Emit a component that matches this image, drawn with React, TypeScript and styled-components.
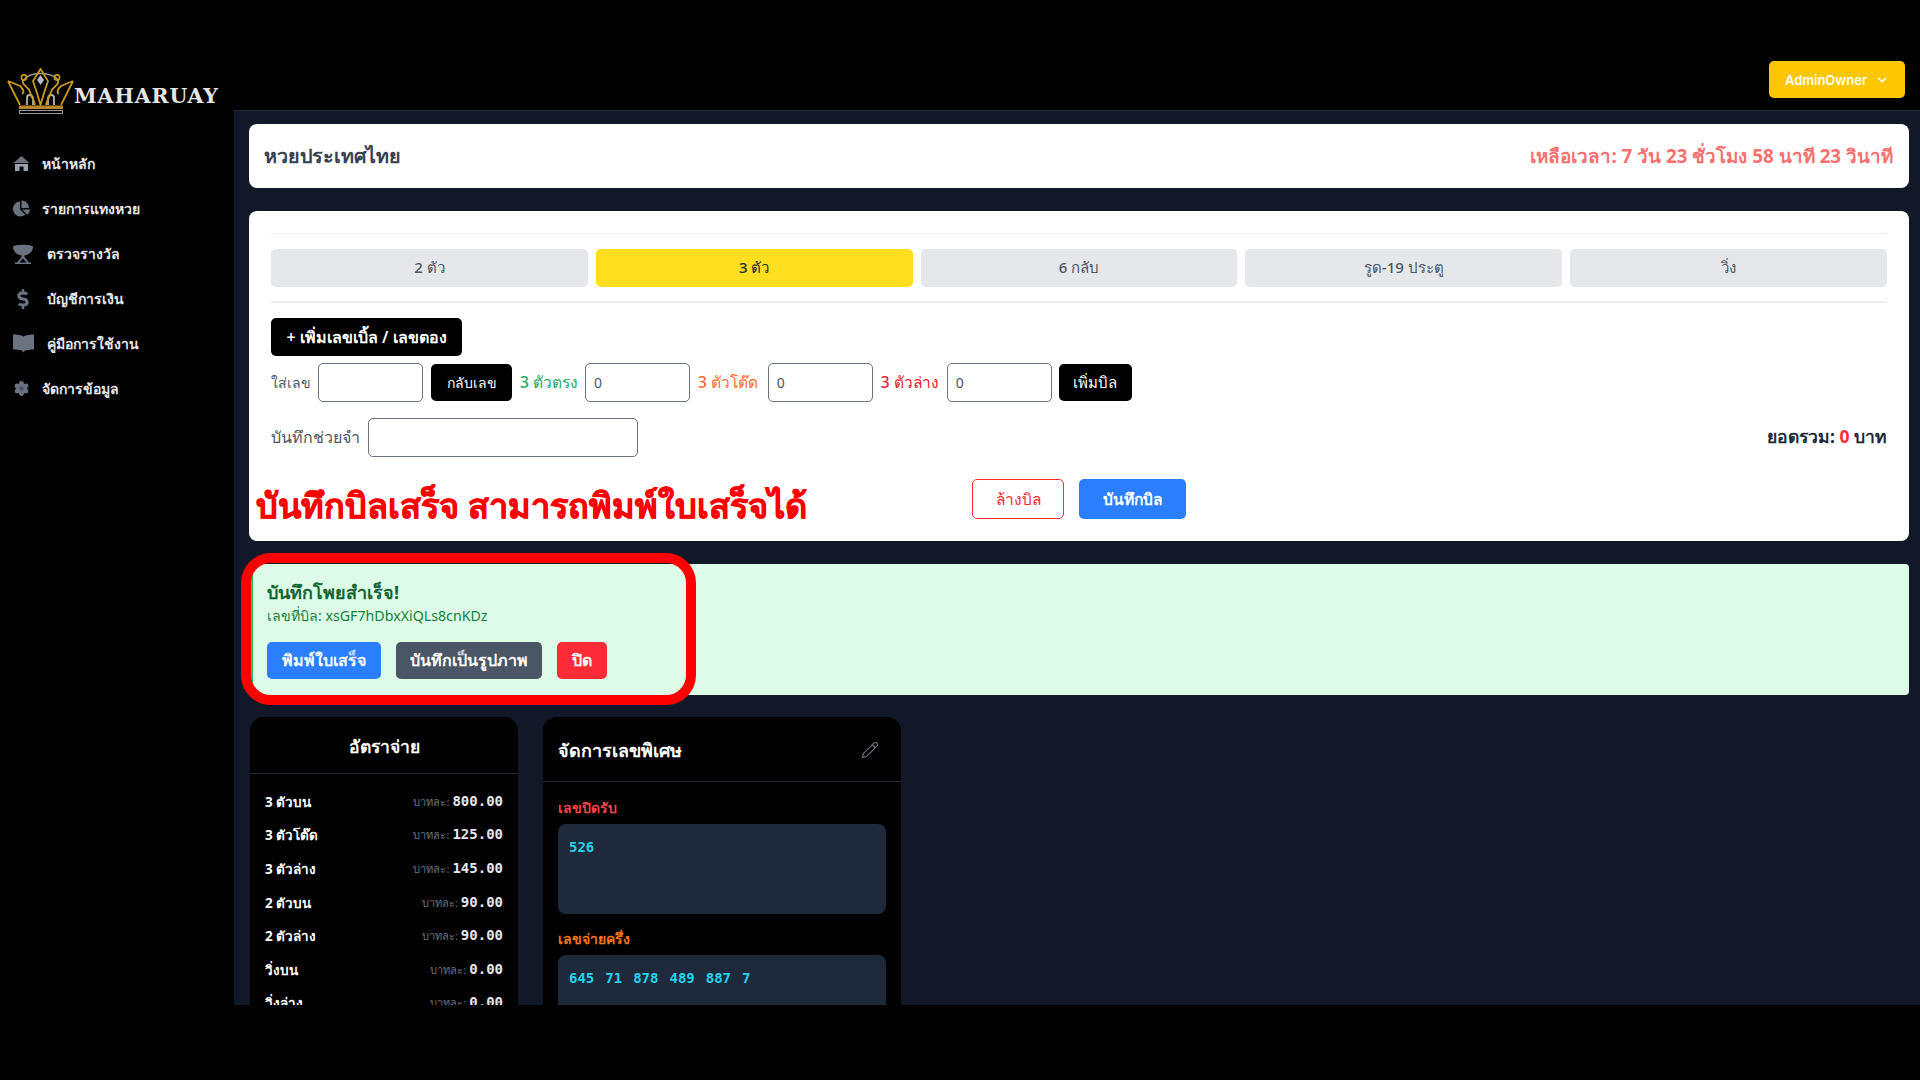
import React from 'react';
import styled, { createGlobalStyle } from 'styled-components';
import { FaChartPie, FaDollarSign } from 'react-icons/fa';
import { ChevronDown, Pencil } from 'lucide-react';

const Global = createGlobalStyle`
  html, body { margin: 0; padding: 0; background: #000; }
  body { font-family: "Noto Sans", "Inter", "Liberation Sans", sans-serif; overflow: hidden; }
  * { box-sizing: border-box; }
`;

const Page = styled.div`
  width: 1920px;
  height: 1080px;
  background: #000;
  overflow: hidden;
`;
const Shell = styled.div`
  display: flex;
  height: 1005px;
`;
const Sidebar = styled.aside`
  width: 234px;
  flex: none;
  background: #000;
  padding-top: 68px;
`;
const LogoRow = styled.div`
  display: flex;
  align-items: center;
  padding-left: 7px;
  height: 46px;
`;
const LogoWord = styled.span`
  font-family: "DejaVu Serif", "Liberation Serif", serif;
  font-weight: 700;
  font-size: 20.5px;
  letter-spacing: 0.9px;
  color: #e5e5e5;
  margin-top: 10px;
`;
const Nav = styled.nav`
  display: flex;
  flex-direction: column;
  margin-top: 27px;
`;
const NavItem = styled.a<{ $indent: number }>`
  display: flex;
  align-items: center;
  height: 45px;
  padding-left: 13px;
  color: #e5e7eb;
  font-size: 14px;
  font-weight: 600;
  svg { color: #6b7280; flex: none; margin-right: ${p => p.$indent}px; }
`;
const Right = styled.div`
  flex: 1;
  min-width: 0;
  display: flex;
  flex-direction: column;
`;
const TopBar = styled.header`
  height: 111px;
  flex: none;
  background: #000;
  border-bottom: 1px solid #1f2937;
  display: flex;
  justify-content: flex-end;
  align-items: flex-start;
  padding: 61px 15px 0 0;
`;
const UserButton = styled.button`
  width: 136px;
  height: 37px;
  background: #fdc700;
  border: none;
  border-radius: 5px;
  color: #fff;
  font-family: "Inter", "Liberation Sans", sans-serif;
  font-size: 13px;
  font-weight: 600;
  display: flex;
  align-items: center;
  justify-content: center;
  gap: 8px;
`;
const Main = styled.main`
  flex: 1;
  min-height: 0;
  overflow: hidden;
  background: #111827;
  padding: 13px 11px 0 15px;
  display: flex;
  flex-direction: column;
  gap: 23px;
`;
const TitleCard = styled.section`
  height: 64px;
  flex: none;
  background: #fff;
  border-radius: 8px;
  display: flex;
  align-items: center;
  justify-content: space-between;
  padding: 0 16px 0 15px;
`;
const LotteryTitle = styled.h1`
  margin: 0;
  font-size: 19.7px;
  line-height: 28px;
  font-weight: 700;
  color: #374151;
`;
const Countdown = styled.span`
  font-size: 18.8px;
  font-weight: 700;
  color: #f87171;
`;
const BetCard = styled.section`
  position: relative;
  height: 330px;
  flex: none;
  background: #fff;
  border-radius: 8px;
  padding: 22px 22px 0;
  display: flex;
  flex-direction: column;
`;
const Rule = styled.hr<{ $thick?: boolean }>`
  margin: 0;
  border: none;
  height: ${p => (p.$thick ? 2 : 1)}px;
  background: #eceef1;
`;
const Tabs = styled.div`
  display: grid;
  grid-template-columns: repeat(5, 1fr);
  gap: 8px;
  margin: 15px 0 14px;
`;
const Tab = styled.button<{ $active?: boolean }>`
  height: 38px;
  border: none;
  border-radius: 5px;
  background: ${p => (p.$active ? '#ffdf20' : '#e5e7eb')};
  color: ${p => (p.$active ? '#1f2937' : '#4b5563')};
  font: inherit;
  font-size: 15px;
  font-weight: 500;
`;
const BlackButton = styled.button<{ $w: number; $size?: number }>`
  width: ${p => p.$w}px;
  height: 37px;
  flex: none;
  background: #000;
  color: #fff;
  border: none;
  border-radius: 5px;
  font: inherit;
  font-size: ${p => p.$size ?? 14}px;
  font-weight: 500;
  padding: 0;
`;
const AddSpecial = styled(BlackButton)`
  height: 38px;
  margin-top: 15px;
  font-weight: 600;
`;
const EntryRow = styled.div`
  display: flex;
  align-items: center;
  height: 39px;
  margin-top: 7px;
`;
const FieldLabel = styled.label<{ $color?: string; $gap: number; $size?: number; $before?: number }>`
  font-size: ${p => p.$size ?? 14}px;
  font-weight: ${p => (p.$color ? 500 : 400)};
  color: ${p => p.$color ?? '#4b5563'};
  margin-left: ${p => p.$before ?? 0}px;
  margin-right: ${p => p.$gap}px;
  white-space: nowrap;
`;
const Field = styled.input<{ $w: number; $after?: number }>`
  width: ${p => p.$w}px;
  height: 39px;
  flex: none;
  border: 1.5px solid #6b7280;
  border-radius: 5px;
  background: #fff;
  padding: 0 8px;
  font: inherit;
  font-size: 14px;
  color: #4b5563;
  margin-right: ${p => p.$after ?? 0}px;
  outline: none;
`;
const MemoRow = styled.div`
  display: flex;
  align-items: center;
  height: 40px;
  margin-top: 15px;
`;
const Total = styled.div`
  margin-left: auto;
  font-size: 17.5px;
  font-weight: 700;
  color: #1f2937;
`;
const TotalValue = styled.span`
  color: #fb2c36;
`;
const ActionRow = styled.div`
  display: flex;
  justify-content: center;
  gap: 15px;
  margin-top: 22px;
`;
const OutlineButton = styled.button`
  width: 92px;
  height: 40px;
  background: #fff;
  border: 1px solid #fb2c36;
  border-radius: 5px;
  color: #fb2c36;
  font: inherit;
  font-size: 15.5px;
  font-weight: 500;
`;
const SolidButton = styled.button<{ $bg: string; $w: number; $h?: number; $size?: number }>`
  width: ${p => p.$w}px;
  height: ${p => p.$h ?? 40}px;
  background: ${p => p.$bg};
  border: none;
  border-radius: 5px;
  color: #fff;
  font: inherit;
  font-size: ${p => p.$size ?? 16}px;
  font-weight: 600;
  padding: 0;
`;
const Callout = styled.div`
  position: absolute;
  left: 7px;
  top: 272px;
  font-size: 34.3px;
  line-height: 44px;
  font-weight: 800;
  color: #ff0000;
  -webkit-text-stroke: 0.6px #ff0000;
  white-space: nowrap;
`;
const SuccessAlert = styled.section`
  position: relative;
  height: 131px;
  flex: none;
  margin-bottom: -1px;
  background: #dcfce7;
  border-left: 4px solid #22c55e;
  border-radius: 4px;
  padding: 17px 0 0 14px;
`;
const AlertTitle = styled.h3`
  margin: 0;
  font-size: 18px;
  line-height: 22px;
  font-weight: 700;
  color: #166534;
`;
const AlertText = styled.p`
  margin: 3px 0 0;
  font-size: 14.2px;
  line-height: 20px;
  color: #15803d;
`;
const AlertActions = styled.div`
  display: flex;
  gap: 15px;
  margin-top: 16px;
`;
const RedRing = styled.div`
  position: absolute;
  left: -12px;
  top: -11px;
  width: 455px;
  height: 152px;
  border: 10px solid #ff0000;
  border-radius: 30px;
  pointer-events: none;
`;
const Columns = styled.div`
  display: flex;
  align-items: flex-start;
  gap: 25px;
  flex: none;
  padding-left: 1px;
`;
const DarkCard = styled.section<{ $w: number }>`
  width: ${p => p.$w}px;
  background: #000;
  border-radius: 14px 14px 0 0;
`;
const RatesHeader = styled.header`
  height: 57px;
  border-bottom: 1px solid #1f2937;
  padding-top: 3px;
  display: flex;
  align-items: center;
  justify-content: center;
  color: #fff;
  font-size: 17.5px;
  font-weight: 600;
`;
const RatesBody = styled.div`
  padding: 11px 15px 0;
`;
const RateRow = styled.div`
  height: 33.6px;
  display: flex;
  align-items: center;
  justify-content: space-between;
`;
const RateName = styled.span`
  color: #fff;
  font-size: 13.5px;
  font-weight: 700;
`;
const RateValue = styled.span`
  display: flex;
  align-items: baseline;
  gap: 3px;
`;
const RateUnit = styled.span`
  color: #6b7280;
  font-size: 11px;
`;
const RateNumber = styled.span`
  color: #e5e7eb;
  font-family: "DejaVu Sans Mono", "Liberation Mono", monospace;
  font-size: 14px;
  font-weight: 700;
`;
const SpecialHeader = styled.header`
  height: 65px;
  border-bottom: 1px solid #1f2937;
  display: flex;
  align-items: center;
  justify-content: space-between;
  padding: 2px 22px 0 15px;
  color: #fff;
  font-size: 18px;
  font-weight: 600;
  svg { color: #6b7280; }
`;
const SpecialBody = styled.div`
  padding: 17px 15px 0;
`;
const SpecialLabel = styled.div<{ $color: string }>`
  color: ${p => p.$color};
  font-size: 14px;
  font-weight: 700;
  line-height: 18px;
  margin-bottom: 7px;
`;
const NumberBox = styled.div`
  height: 90px;
  background: #1e293b;
  border-radius: 8px;
  padding: 14px 11px;
  margin-bottom: 16px;
  color: #22d3ee;
  font-family: "DejaVu Sans Mono", "Liberation Mono", monospace;
  font-size: 14px;
  font-weight: 700;
  line-height: 18px;
  display: flex;
  gap: 11px;
`;

const Crown = () => (
  <svg width="67" height="46" viewBox="0 0 67 46" fill="none">
    <path d="M16 13 C22 3 45 3 52 13" stroke="#9a9a9a" strokeWidth="1.5" />
    <path d="M20 37 V30 C20 26 25 26 26 30 V37 M47 37 V30 C47 26 42 26 41 30 V37" stroke="#b5b5b5" strokeWidth="1.8" />
    <path d="M1 13 L13 18 C16 21 18 24 15 26 M1 13 L13 37 M66 13 L54 18 C51 21 49 24 52 26 M66 13 L54 37" stroke="#c9971c" strokeWidth="1.8" />
    <path d="M16 12 C14 18 22 18 23 24 C24 29 27 31 28 37 M51 12 C53 18 45 18 44 24 C43 29 40 31 39 37" stroke="#c9971c" strokeWidth="1.8" />
    <circle cx="17" cy="9.5" r="2.6" stroke="#c9971c" strokeWidth="1.6" />
    <circle cx="50" cy="9.5" r="2.6" stroke="#c9971c" strokeWidth="1.6" />
    <path d="M33.5 1 L41 13 L37 25 L33.5 37 L30 25 L26 13 Z" stroke="#c9971c" strokeWidth="1.8" />
    <path d="M33.5 7 L37 12 L33.5 17 L30 12 Z" fill="#b9b9c4" />
    <rect x="12" y="37.5" width="44" height="3.5" fill="#b8862a" />
    <rect x="12.5" y="42.5" width="43" height="3" stroke="#9a9a9a" strokeWidth="1" />
  </svg>
);

const HomeIcon = ({ size }: { size: number }) => (
  <svg width={size} height={size} viewBox="0 0 17 17" fill="none">
    <path d="M8.5 1 L16.5 8 H0.5 Z" fill="#6b7280" />
    <path d="M2 9 H15 V16 H10.5 V11.5 H6.5 V16 H2 Z" fill="#9ca3af" />
  </svg>
);

const TrophyIcon = ({ size }: { size: number }) => (
  <svg width={size} height={size} viewBox="0 0 20 20" fill="#6b7280">
    <path
      fillRule="evenodd"
      d="M0 3 C0 0 20 0 20 3 C20 8 15 11 11.5 11.5 V13 L16 18.5 H18 V20 H2 V18.5 H4 L8.5 13 V11.5 C5 11 0 8 0 3 Z M10 14.5 L6.5 18.5 H13.5 Z"
    />
  </svg>
);

const BookIcon = ({ size }: { size: number }) => (
  <svg width={size} height={size} viewBox="0 0 21 21" fill="#6b7280">
    <path d="M0 1.5 C4 1.5 8 2 10.5 3.5 C13 2 17 1.5 21 1.5 V16.5 C17 16.5 13 17 11.5 18 L10.5 19.5 L9.5 18 C8 17 4 16.5 0 16.5 Z" />
  </svg>
);

const CogIcon = ({ size }: { size: number }) => (
  <svg width={size} height={size} viewBox="0 0 17 17" fill="#6b7280">
    <circle cx="8.5" cy="8.5" r="5.5" />
    <circle cx="8.5" cy="3.3" r="2.4" />
    <circle cx="8.5" cy="13.7" r="2.4" />
    <circle cx="4" cy="5.9" r="2.4" />
    <circle cx="13" cy="5.9" r="2.4" />
    <circle cx="4" cy="11.1" r="2.4" />
    <circle cx="13" cy="11.1" r="2.4" />
    <circle cx="8.5" cy="8.5" r="2.2" fill="#4b5563" />
  </svg>
);

const navItems = [
  { label: 'หน้าหลัก', Icon: HomeIcon, size: 17, indent: 12 },
  { label: 'รายการแทงหวย', Icon: FaChartPie, size: 17, indent: 12 },
  { label: 'ตรวจรางวัล', Icon: TrophyIcon, size: 20, indent: 14 },
  { label: 'บัญชีการเงิน', Icon: FaDollarSign, size: 20, indent: 14 },
  { label: 'คู่มือการใช้งาน', Icon: BookIcon, size: 21, indent: 13 },
  { label: 'จัดการข้อมูล', Icon: CogIcon, size: 17, indent: 12 },
];

const tabs = ['2 ตัว', '3 ตัว', '6 กลับ', 'รูด-19 ประตู', 'วิ่ง'];

const rates = [
  ['3 ตัวบน', '800.00'],
  ['3 ตัวโต๊ด', '125.00'],
  ['3 ตัวล่าง', '145.00'],
  ['2 ตัวบน', '90.00'],
  ['2 ตัวล่าง', '90.00'],
  ['วิ่งบน', '0.00'],
  ['วิ่งล่าง', '0.00'],
];

const halfPay = ['645', '71', '878', '489', '887', '7'];

export default function App() {
  return (
    <Page>
      <Global />
      <Shell>
        <Sidebar>
          <LogoRow>
            <Crown />
            <LogoWord>MAHARUAY</LogoWord>
          </LogoRow>
          <Nav>
            {navItems.map(({ label, Icon, size, indent }) => (
              <NavItem key={label} $indent={indent}>
                <Icon size={size} />
                {label}
              </NavItem>
            ))}
          </Nav>
        </Sidebar>
        <Right>
          <TopBar>
            <UserButton>
              AdminOwner
              <ChevronDown size={14} strokeWidth={2.5} />
            </UserButton>
          </TopBar>
          <Main>
            <TitleCard>
              <LotteryTitle>หวยประเทศไทย</LotteryTitle>
              <Countdown>เหลือเวลา: 7 วัน 23 ชั่วโมง 58 นาที 23 วินาที</Countdown>
            </TitleCard>
            <BetCard>
              <Rule />
              <Tabs>
                {tabs.map((t, i) => (
                  <Tab key={t} $active={i === 1}>{t}</Tab>
                ))}
              </Tabs>
              <Rule $thick />
              <div>
                <AddSpecial $w={191} $size={16}>+ เพิ่มเลขเบิ้ล / เลขตอง</AddSpecial>
              </div>
              <EntryRow>
                <FieldLabel $gap={7}>ใส่เลข</FieldLabel>
                <Field $w={105} $after={8} />
                <BlackButton $w={81}>กลับเลข</BlackButton>
                <FieldLabel $color="#22a861" $gap={7} $size={15.5} $before={8}>3 ตัวตรง</FieldLabel>
                <Field $w={105} $after={8} defaultValue="0" />
                <FieldLabel $color="#ff6b35" $gap={10} $size={15.5}>3 ตัวโต๊ด</FieldLabel>
                <Field $w={105} $after={8} defaultValue="0" />
                <FieldLabel $color="#e7202f" $gap={8} $size={15.5}>3 ตัวล่าง</FieldLabel>
                <Field $w={105} $after={7} defaultValue="0" />
                <BlackButton $w={73} $size={15}>เพิ่มบิล</BlackButton>
              </EntryRow>
              <MemoRow>
                <FieldLabel $gap={8} $size={16}>บันทึกช่วยจำ</FieldLabel>
                <Field $w={270} />
                <Total>
                  ยอดรวม: <TotalValue>0</TotalValue> บาท
                </Total>
              </MemoRow>
              <ActionRow>
                <OutlineButton>ล้างบิล</OutlineButton>
                <SolidButton $bg="#2b7fff" $w={107} $size={15.5}>บันทึกบิล</SolidButton>
              </ActionRow>
              <Callout>บันทึกบิลเสร็จ สามารถพิมพ์ใบเสร็จได้</Callout>
            </BetCard>
            <SuccessAlert>
              <AlertTitle>บันทึกโพยสำเร็จ!</AlertTitle>
              <AlertText>เลขที่บิล: xsGF7hDbxXiQLs8cnKDz</AlertText>
              <AlertActions>
                <SolidButton $bg="#2b7fff" $w={114} $h={37}>พิมพ์ใบเสร็จ</SolidButton>
                <SolidButton $bg="#4a5565" $w={146} $h={37}>บันทึกเป็นรูปภาพ</SolidButton>
                <SolidButton $bg="#fb2c36" $w={50} $h={37}>ปิด</SolidButton>
              </AlertActions>
              <RedRing />
            </SuccessAlert>
            <Columns>
              <DarkCard $w={268}>
                <RatesHeader>อัตราจ่าย</RatesHeader>
                <RatesBody>
                  {rates.map(([name, value]) => (
                    <RateRow key={name}>
                      <RateName>{name}</RateName>
                      <RateValue>
                        <RateUnit>บาทละ:</RateUnit>
                        <RateNumber>{value}</RateNumber>
                      </RateValue>
                    </RateRow>
                  ))}
                </RatesBody>
              </DarkCard>
              <DarkCard $w={358}>
                <SpecialHeader>
                  จัดการเลขพิเศษ
                  <Pencil size={18} strokeWidth={1.6} />
                </SpecialHeader>
                <SpecialBody>
                  <SpecialLabel $color="#ef4444">เลขปิดรับ</SpecialLabel>
                  <NumberBox>526</NumberBox>
                  <SpecialLabel $color="#f97316">เลขจ่ายครึ่ง</SpecialLabel>
                  <NumberBox>
                    {halfPay.map((n, i) => (
                      <span key={i}>{n}</span>
                    ))}
                  </NumberBox>
                </SpecialBody>
              </DarkCard>
            </Columns>
          </Main>
        </Right>
      </Shell>
    </Page>
  );
}
